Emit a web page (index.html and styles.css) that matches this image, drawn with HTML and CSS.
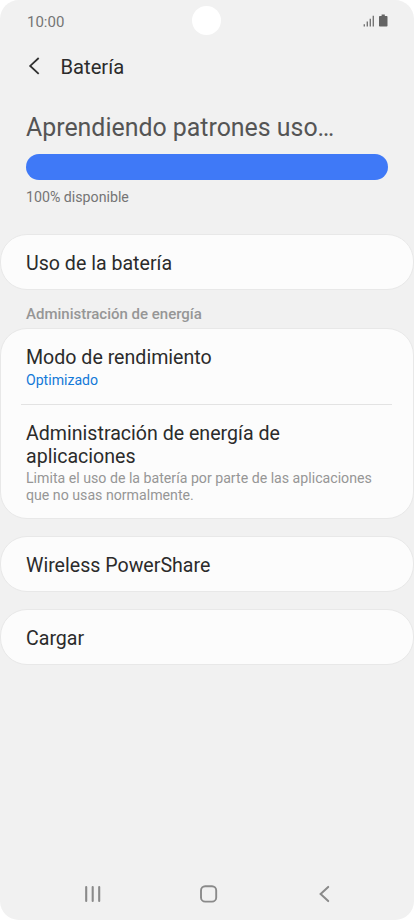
FILE: index.html
```
<!DOCTYPE html>
<html lang="es">
	<head>
		<meta charset="utf-8">
		<title>Batería</title>
		<link rel="stylesheet" href="styles.css">
	</head>

	<body>
		<div class="phone">
			<div class="status">
				<span class="time">10:00</span>
				<svg class="status-icons" width="26" height="14" viewBox="0 0 26 14">
					<path d="M1.6 11.2h1.4v2.3H1.6zM4.6 8.5H6v5H4.6zM7.6 5.8H9v7.7H7.6zM10.6 2.8H12v10.7h-1.4z" fill="#757575"/>
					<path d="M17.8 2.9h1.800V1.6h3.200v1.3h1.900q.8 0 .8.8v9q0 .8-.8.8h-6.900q-.8 0-.8-.8v-9q0-.8.8-.8z" fill="#646464"/>
				</svg>
				<div class="camera"></div>
			</div>

			<div class="header">
				<svg class="back" width="12" height="18" viewBox="0 0 12 18">
					<path d="M10.7 1L2.2 8.9l8.500 7.900" fill="none" stroke="#303030" stroke-width="1.8"/>
				</svg>
				<h1>Batería</h1>
			</div>

			<div class="summary">
				<h2>Aprendiendo patrones uso…</h2>
				<div class="bar"></div>
				<p>100% disponible</p>
			</div>

			<div class="card single">Uso de la batería</div>

			<h3>Administración de energía</h3>

			<div class="card group">
				<div class="item mode">
					<div class="name">Modo de rendimiento</div>
					<div class="value">Optimizado</div>
				</div>
				<div class="item apps">
					<div class="name">Administración de energía de<br>aplicaciones</div>
					<div class="info">Limita el uso de la batería por parte de las aplicaciones<br>que no usas normalmente.</div>
				</div>
			</div>

			<div class="card single">Wireless PowerShare</div>
			<div class="card single">Cargar</div>

			<div class="nav">
				<svg width="18" height="18" viewBox="0 0 18 18">
					<path d="M2.2 2v14M8.7 2v14M15.2 2v14" stroke="#8a8a8a" stroke-width="2.1" stroke-linecap="round"/>
				</svg>
				<svg width="18" height="18" viewBox="0 0 18 18">
					<rect x="1" y="1.2" width="15.2" height="15.4" rx="4.2" fill="none" stroke="#8a8a8a" stroke-width="1.9"/>
				</svg>
				<svg width="18" height="18" viewBox="0 0 18 18">
					<path d="M13.2 1.9L5.6 9l7.6 7.1" fill="none" stroke="#8a8a8a" stroke-width="2" stroke-linecap="round"/>
				</svg>
			</div>
		</div>
	</body>
</html>
```
FILE: styles.css
```
*{
	box-sizing:border-box;
}
body{
	margin:0;
	background:#fff;
	font-family:Roboto, "Liberation Sans", sans-serif;
	color:#2b2b2b;
}
h1, h2, h3, p{
	margin:0;
	font-weight:400;
}
svg{
	display:block;
}
.phone{
	display:flex;
	flex-direction:column;
	width:414px;
	height:920px;
	background:#f1f1f1;
	border-radius:19px;
	overflow:hidden;
}

.status{
	position:relative;
	display:flex;
	justify-content:space-between;
	height:42px;
	padding:13px 26px 0 27px;
}
.time{
	font-size:15px;
	line-height:18px;
	color:#757575;
}
.camera{
	position:absolute;
	top:6px;
	left:192px;
	width:29px;
	height:29px;
	border-radius:50%;
	background:#fff;
}

.header{
	display:flex;
	align-items:center;
	height:48px;
	padding-left:28px;
	gap:20.5px;
}
.header h1{
	padding-top:1px;
	font-size:20.2px;
	line-height:24px;
}

.summary{
	height:144px;
	padding:22px 26px 0;
}
.summary h2{
	font-size:24.9px;
	line-height:32px;
	color:#555;
	white-space:nowrap;
}
.bar{
	height:26px;
	margin-top:10px;
	border-radius:13px;
	background:#3f79f7;
}
.summary p{
	margin-top:8px;
	font-size:14.2px;
	line-height:18px;
	color:#757575;
}

.card{
	flex:none;
	border:1px solid #e8e8e8;
	border-radius:27px;
	background:#fcfcfc;
	font-size:19.6px;
}
.single{
	height:56px;
	padding-left:25px;
	line-height:57px;
}
.single + .single, .group + .single{
	margin-top:17px;
}

h3{
	height:38px;
	padding:15px 26px 0;
	font-size:15px;
	font-weight:500;
	line-height:18px;
	color:#969696;
}

.group{
	height:191px;
	padding:0 21px 0 20px;
}
.item{
	padding-left:5px;
}
.name{
	line-height:23px;
}
.mode{
	height:76px;
	padding-top:17px;
	border-bottom:1px solid #e3e3e3;
}
.value{
	margin-top:2px;
	font-size:14.1px;
	line-height:18px;
	color:#1379d8;
}
.apps{
	padding-top:17px;
}
.info{
	margin-top:2px;
	font-size:14.17px;
	line-height:17px;
	color:#969696;
	white-space:nowrap;
}

.nav{
	display:flex;
	justify-content:space-between;
	margin-top:auto;
	padding:0 81px 17px 84px;
}
```
